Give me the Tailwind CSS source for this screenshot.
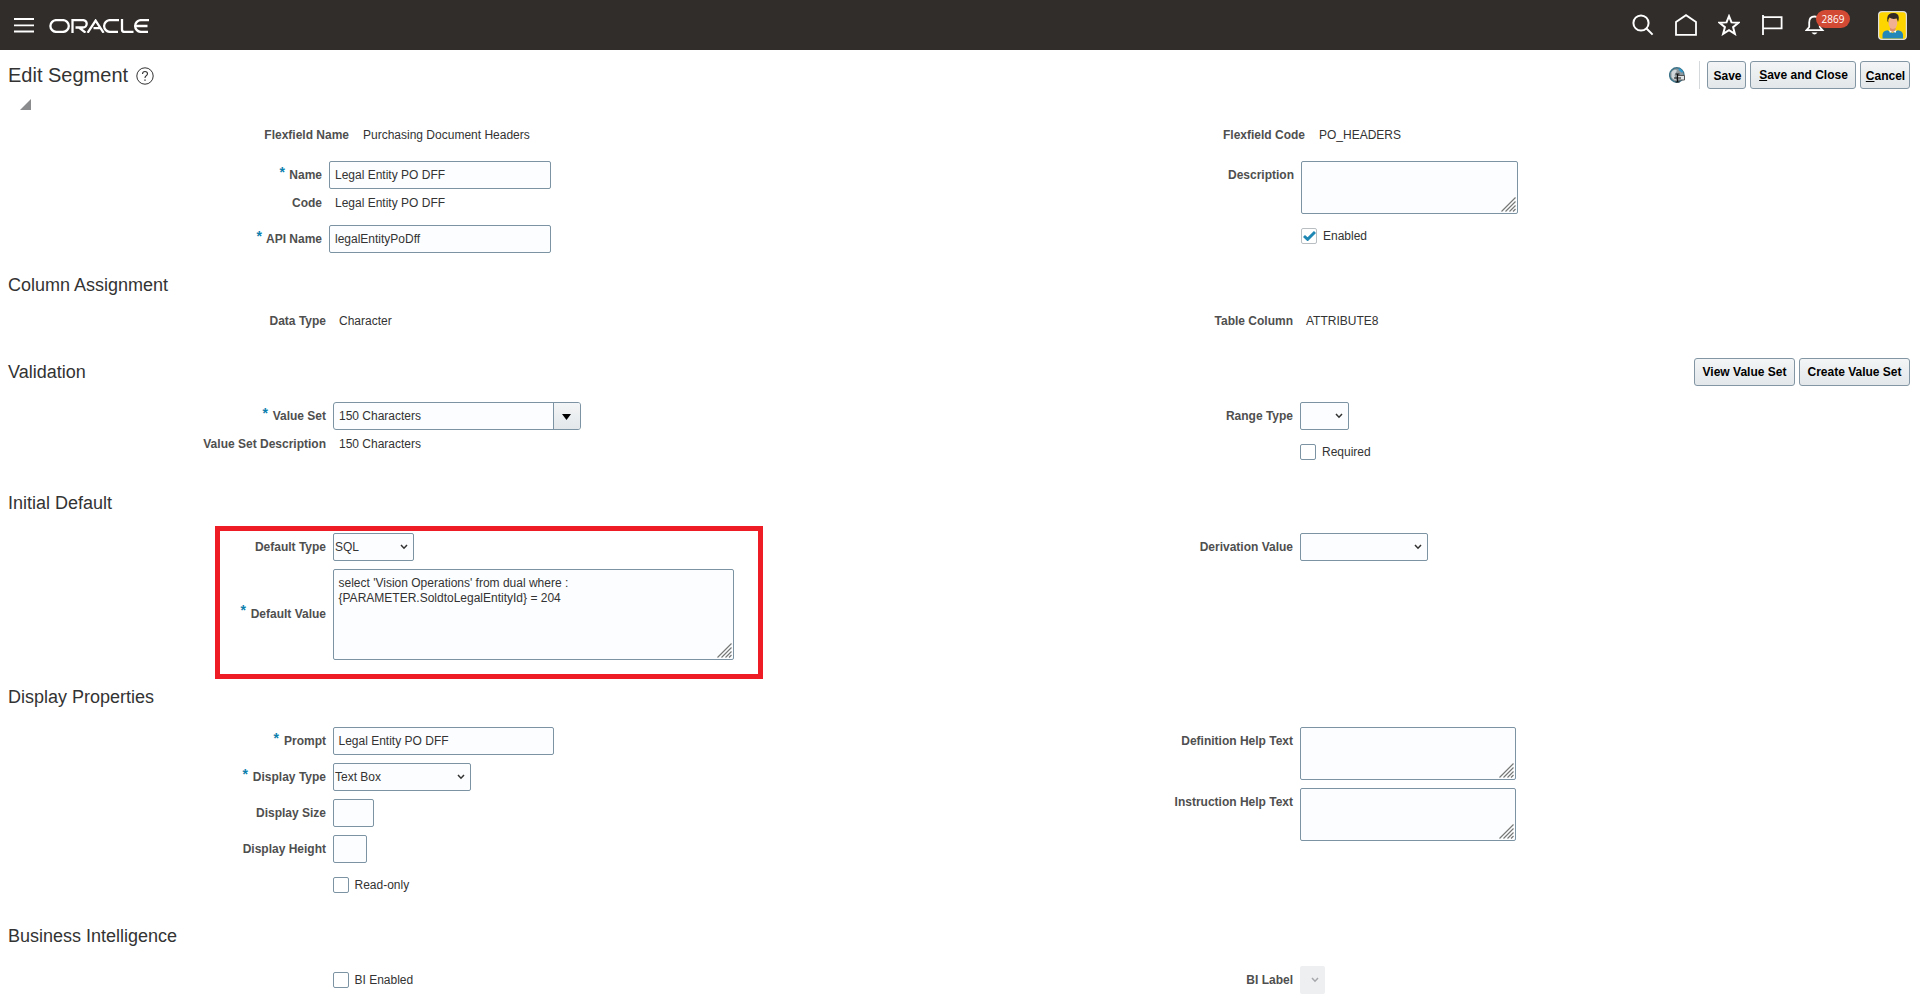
<!DOCTYPE html>
<html lang="en">
<head>
<meta charset="utf-8">
<title>Edit Segment</title>
<script src="https://cdn.jsdelivr.net/npm/@tailwindcss/browser@4"></script>
</head>
<body class="h-[1007px] w-[1920px] overflow-hidden bg-white font-['Liberation_Sans',Arial,sans-serif] text-xs leading-[14px] text-[#333]">
<svg class="hidden">
  <symbol id="grip" viewBox="0 0 15 15"><path d="M0.5 14.5L14.5 0.5M4.5 14.5L14.5 4.5M8.5 14.5L14.5 8.5M12 14.5L14.5 12" stroke="#777" stroke-width="1.2" fill="none"/></symbol>
  <symbol id="chev" viewBox="0 0 8 6"><path d="M1 1L4 4.2L7 1" stroke="currentColor" stroke-width="1.5" fill="none"/></symbol>
</svg>

<header class="flex h-[50px] items-center bg-[#312d2a] pr-[13px] pl-[14px]">
  <svg class="h-[15px] w-5" viewBox="0 0 20 15"><path d="M0 1H20M0 7.3H20M0 13.5H20" stroke="#fff" stroke-width="1.8"/></svg>
  <svg class="mt-[2px] ml-[15px] h-[14px] w-[101px]" viewBox="0 0 101 14" fill="none" stroke="#fff" stroke-width="2.3">
    <rect x="1.4" y="1.1" width="18.4" height="11.8" rx="5.9"/>
    <path d="M23.5 14V1.1H34a3.6 3.6 0 0 1 0 7.4H26.5M30 8.5L36.5 13.6"/>
    <path d="M38.6 13.8L46.6 1.6L54.6 13.8M44.5 9.2H51.5"/>
    <path d="M70 1.1H61a5.9 5.9 0 0 0 0 11.8H69"/>
    <path d="M73 0V10.5Q73 12.9 75.5 12.9H84.5"/>
    <path d="M100 1.1H92a5.9 5.9 0 0 0 0 11.8H99M86.5 7H98.5"/>
  </svg>
  <div class="ml-auto flex items-center text-white">
    <svg class="size-[22px]" viewBox="0 0 22 22" fill="none" stroke="#fff" stroke-width="2"><circle cx="9" cy="9" r="7.6"/><path d="M14.5 14.5L20.6 20.6"/></svg>
    <svg class="ml-[21px] size-[22px]" viewBox="0 0 22 22" fill="none" stroke="#fff" stroke-width="1.8"><path d="M1 20.9V8L11 1.2L21 8V20.9Z"/></svg>
    <svg class="ml-[21px] size-[22px]" viewBox="0 0 22 22" fill="none" stroke="#fff" stroke-width="2"><path d="M11 2.2L13.5 8.4L20.4 8.7L15.1 13.2L16.9 19.9L11 16.2L5.1 19.9L6.9 13.2L1.6 8.7L8.5 8.4Z"/></svg>
    <svg class="ml-[21px] h-[20px] w-[22px]" viewBox="0 0 22 20" fill="none" stroke="#fff" stroke-width="1.8"><path d="M2 0V20M2 2.2H20.6V13.4H2"/></svg>
    <div class="relative ml-[22px]">
      <svg class="h-[21px] w-[20px]" viewBox="0 0 20 21" fill="none" stroke="#fff" stroke-width="1.8"><path d="M1.5 15.2H17.5L14.8 12V7.5Q14.8 1.5 9.5 1.5T4.2 7.5V12Z"/><path d="M6.5 17.5Q9.5 21.5 12.5 17.5Z" fill="#fff" stroke="none"/></svg>
      <span class="absolute -top-[5px] left-[11px] h-[18px] w-[34px] rounded-full bg-[#d24a33] text-center font-['Open_Sans',sans-serif] text-[10px] leading-[18px]">2869</span>
    </div>
    <svg class="ml-[53px] size-[29px]" viewBox="0 0 29 29">
      <rect x="0.6" y="0.6" width="27.8" height="27.8" rx="3.5" fill="#ffd500" stroke="#ddd" stroke-width="1.2"/>
      <path d="M4.5 27.6V23.5Q5 19.5 9.5 19.2L14.5 22L19.8 19.2Q24.3 19.5 25 23.5V27.6Z" fill="#2388b8"/>
      <path d="M12 15H17.5V19.5L14.7 21.6L12 19.5Z" fill="#d98f70"/>
      <ellipse cx="14.9" cy="12" rx="4.4" ry="6" fill="#f0b091"/>
      <path d="M11.2 19L14.7 21.2L18.3 19L17.8 21.8L14.7 20.8L11.8 21.8Z" fill="#fff"/>
      <path d="M9.3 10Q8.5 3.5 13 2.2Q20.5 0.8 20.8 6.5Q20.8 9 20 11L18.8 7.5Q14 8.8 11.5 6.5Q10 8 10.3 11.5Z" fill="#332823"/>
    </svg>
  </div>
</header>

<div class="flex h-[50px] items-start pt-[11px] pr-[10px] pl-2">
  <h1 class="pt-px text-xl leading-[26px]">Edit Segment</h1>
  <svg class="mt-[6px] ml-2 size-[18px]" viewBox="0 0 18 18"><circle cx="9" cy="9" r="8.2" fill="none" stroke="#333"/><path d="M6.5 7Q6.6 4.5 9 4.5T11.5 6.8Q11.5 8 10.2 8.8T9 11" fill="none" stroke="#333" stroke-width="1.1"/><path d="M8.3 12.4H9.7V13.8H8.3Z" fill="#333"/></svg>
  <div class="ml-auto flex font-bold text-black">
    <svg class="mt-[6px] size-4" viewBox="0 0 16 16"><circle cx="7.8" cy="8" r="7.2" fill="#8d979c" stroke="#3d7389" stroke-width="1.4"/><path d="M2.5 5Q5.5 1.5 8 3.5L5.5 8L7 13Q4 13 2.5 10Z" fill="#d0d6d9"/><path d="M10 2L13.5 5" stroke="#2d9bd0" stroke-width="2"/><path d="M8.5 8.5H15.5V13H8.5Z" fill="#dfe3e5" stroke="#555"/><path d="M6.5 7H10.5M8.5 7V15M6.5 15H10.5M5 11H12" stroke="#111" stroke-width="1.2"/></svg>
    <div class="mr-[7px] ml-[14px] h-7 w-px bg-[#d6d9db]"></div>
    <div class="flex gap-1">
      <button class="h-7 w-[39px] rounded-[3px] border border-[#8296a4] bg-linear-to-b from-[#f3f5f6] to-[#e3e7e9] pt-[2px] pl-[2px]">Save</button>
      <button class="h-7 w-[106px] rounded-[3px] border border-[#8296a4] bg-linear-to-b from-[#f3f5f6] to-[#e3e7e9] pl-px"><u>S</u>ave and Close</button>
      <button class="h-7 w-[50px] rounded-[3px] border border-[#8296a4] bg-linear-to-b from-[#f3f5f6] to-[#e3e7e9] pt-[2px] pl-px"><u>C</u>ancel</button>
    </div>
  </div>
</div>

<!-- Flexfield details -->
<section class="flex h-[172px]">
  <div class="w-[967px]">
    <svg class="-mt-px ml-5 size-[11px]" viewBox="0 0 11 11"><path d="M11 0V11H0Z" fill="#8b8c8d"/></svg>
    <div class="mt-[18px] flex"><b class="w-[349px] text-right text-[#4f4f4f]">Flexfield Name</b><span class="ml-[14px]">Purchasing Document Headers</span></div>
    <div class="mt-[19px] flex items-center"><b class="w-[285px] pb-[7px] text-right text-sm text-[#0b7fad]">*</b><b class="w-[37px] text-right text-[#4f4f4f]">Name</b><div class="ml-[7px] h-7 w-[222px] rounded-[2px] border border-[#7b93a3] bg-[#fcfdfe] px-[5px] leading-[26px]">Legal Entity PO DFF</div></div>
    <div class="mt-[7px] flex"><b class="w-[322px] text-right text-[#4f4f4f]">Code</b><span class="ml-[13px]">Legal Entity PO DFF</span></div>
    <div class="mt-[15px] flex items-center"><b class="w-[262px] pb-[7px] text-right text-sm text-[#0b7fad]">*</b><b class="w-[60px] text-right text-[#4f4f4f]">API Name</b><div class="ml-[7px] h-7 w-[222px] rounded-[2px] border border-[#7b93a3] bg-[#fcfdfe] px-[5px] leading-[26px]">legalEntityPoDff</div></div>
  </div>
  <div class="flex-1 pt-7">
    <div class="flex"><b class="w-[338px] text-right text-[#4f4f4f]">Flexfield Code</b><span class="ml-[14px]">PO_HEADERS</span></div>
    <div class="mt-[19px] flex"><b class="mt-[7px] w-[327px] text-right text-[#4f4f4f]">Description</b><div class="ml-[7px] flex h-[53px] w-[217px] items-end justify-end rounded-[2px] border border-[#7b93a3] bg-[#fcfdfe] p-px"><svg class="size-[15px]"><use href="#grip"/></svg></div></div>
    <div class="mt-[14px] ml-[334px] flex items-center"><div class="flex size-4 items-center justify-center rounded-[2px] border border-[#b9bec2]"><svg class="h-[10px] w-[13px]" viewBox="0 0 13 10"><path d="M1 5L4.6 8.4L12 1" stroke="#1f87b3" stroke-width="2.9" fill="none"/></svg></div><span class="ml-[6px]">Enabled</span></div>
  </div>
</section>

<!-- Column Assignment -->
<section class="h-[86px] pt-[2px]">
  <h2 class="pl-2 text-lg leading-[22px]">Column Assignment</h2>
  <div class="mt-[18px] flex">
    <b class="w-[326px] text-right text-[#4f4f4f]">Data Type</b><span class="ml-[13px] w-[628px]">Character</span>
    <b class="w-[326px] text-right text-[#4f4f4f]">Table Column</b><span class="ml-[13px]">ATTRIBUTE8</span>
  </div>
</section>

<!-- Validation -->
<section class="h-[134px]">
  <div class="flex h-7 pr-[10px] pl-2">
    <h2 class="pt-[3px] text-lg leading-[22px]">Validation</h2>
    <div class="ml-auto flex gap-1 font-bold text-black">
      <button class="h-7 w-[101px] rounded-[3px] border border-[#8296a4] bg-linear-to-b from-[#f3f5f6] to-[#e3e7e9]">View Value Set</button>
      <button class="h-7 w-[111px] rounded-[3px] border border-[#8296a4] bg-linear-to-b from-[#f3f5f6] to-[#e3e7e9]">Create Value Set</button>
    </div>
  </div>
  <div class="mt-4 flex">
    <div class="w-[967px]">
      <div class="flex items-center"><b class="w-[268px] pb-[7px] text-right text-sm text-[#0b7fad]">*</b><b class="w-[58px] text-right text-[#4f4f4f]">Value Set</b><div class="ml-[7px] flex h-7 w-[248px] overflow-hidden rounded-[3px] border border-[#7b93a3] bg-[#fcfdfe] leading-[26px]"><span class="w-[219px] pl-[5px]">150 Characters</span><div class="flex flex-1 items-center justify-center border-l border-[#7b93a3] bg-linear-to-b from-[#f3f5f6] to-[#e3e7e9] pr-px"><svg class="mt-[2px] h-[6px] w-[9px]" viewBox="0 0 9 6"><path d="M0 0H9L4.5 6Z"/></svg></div></div></div>
      <div class="mt-[7px] flex"><b class="w-[326px] text-right text-[#4f4f4f]">Value Set Description</b><span class="ml-[13px]">150 Characters</span></div>
    </div>
    <div class="flex-1">
      <div class="flex items-center"><b class="w-[326px] text-right text-[#4f4f4f]">Range Type</b><div class="ml-[7px] flex h-7 w-[49px] items-center justify-end rounded-[2px] border border-[#7b93a3] bg-[#fcfdfe] pr-[5px]"><svg class="h-[6px] w-2 text-[#333]"><use href="#chev"/></svg></div></div>
      <div class="mt-[14px] ml-[333px] flex items-center"><div class="size-4 rounded-[2px] border border-[#7b93a3]"></div><span class="ml-[6px]">Required</span></div>
    </div>
  </div>
</section>

<!-- Initial Default -->
<section class="relative h-[194px]">
  <h2 class="pl-2 text-lg leading-[22px]">Initial Default</h2>
  <div class="absolute top-[34px] left-[215px] h-[153px] w-[548px] border-[5px] border-[#ee1c24]"></div>
  <div class="mt-[19px] flex">
    <div class="w-[967px]">
      <div class="flex items-center"><b class="w-[326px] text-right text-[#4f4f4f]">Default Type</b><div class="ml-[7px] flex h-7 w-[81px] items-center justify-between rounded-[2px] border border-[#7b93a3] bg-[#fcfdfe] pr-[5px] pl-px"><span>SQL</span><svg class="h-[6px] w-2 text-[#333]"><use href="#chev"/></svg></div></div>
      <div class="mt-2 flex items-center"><b class="w-[246px] pb-[9px] text-right text-sm text-[#0b7fad]">*</b><b class="w-20 pb-[2px] text-right text-[#4f4f4f]">Default Value</b><div class="relative ml-[7px] h-[91px] w-[401px] rounded-[2px] border border-[#7b93a3] bg-[#fcfdfe] px-[4.5px] py-[6px] leading-[15px]">select 'Vision Operations' from dual where :<br>{PARAMETER.SoldtoLegalEntityId} = 204<svg class="absolute right-px bottom-px size-[15px]"><use href="#grip"/></svg></div></div>
    </div>
    <div class="flex-1">
      <div class="flex items-center"><b class="w-[326px] text-right text-[#4f4f4f]">Derivation Value</b><div class="ml-[7px] flex h-7 w-[128px] items-center justify-end rounded-[2px] border border-[#7b93a3] bg-[#fcfdfe] pr-[5px]"><svg class="h-[6px] w-2 text-[#333]"><use href="#chev"/></svg></div></div>
    </div>
  </div>
</section>

<!-- Display Properties -->
<section class="h-[239px]">
  <h2 class="pl-2 text-lg leading-[22px]">Display Properties</h2>
  <div class="mt-[19px] flex">
    <div class="flex w-[967px] flex-col gap-2">
      <div class="flex items-center"><b class="w-[279px] pb-[7px] text-right text-sm text-[#0b7fad]">*</b><b class="w-[47px] text-right text-[#4f4f4f]">Prompt</b><div class="ml-[7px] h-7 w-[221px] rounded-[2px] border border-[#7b93a3] bg-[#fcfdfe] px-[4.5px] leading-[26px]">Legal Entity PO DFF</div></div>
      <div class="flex items-center"><b class="w-[248px] pb-[7px] text-right text-sm text-[#0b7fad]">*</b><b class="w-[78px] text-right text-[#4f4f4f]">Display Type</b><div class="ml-[7px] flex h-7 w-[138px] items-center justify-between rounded-[2px] border border-[#7b93a3] bg-[#fcfdfe] pr-[5px] pl-px"><span>Text Box</span><svg class="h-[6px] w-2 text-[#333]"><use href="#chev"/></svg></div></div>
      <div class="flex items-center"><b class="w-[326px] text-right text-[#4f4f4f]">Display Size</b><div class="ml-[7px] h-7 w-[41px] rounded-[2px] border border-[#7b93a3] bg-[#fcfdfe]"></div></div>
      <div class="flex items-center"><b class="w-[326px] text-right text-[#4f4f4f]">Display Height</b><div class="ml-[7px] h-7 w-[34px] rounded-[2px] border border-[#7b93a3] bg-[#fcfdfe]"></div></div>
      <div class="mt-[6px] ml-[333px] flex items-center"><div class="size-4 rounded-[2px] border border-[#7b93a3]"></div><span class="ml-[5.5px]">Read-only</span></div>
    </div>
    <div class="flex flex-1 flex-col gap-2">
      <div class="flex"><b class="mt-[7px] w-[326px] text-right text-[#4f4f4f]">Definition Help Text</b><div class="ml-[7px] flex h-[53px] w-[216px] items-end justify-end rounded-[2px] border border-[#7b93a3] bg-[#fcfdfe] p-px"><svg class="size-[15px]"><use href="#grip"/></svg></div></div>
      <div class="flex"><b class="mt-[7px] w-[326px] text-right text-[#4f4f4f]">Instruction Help Text</b><div class="ml-[7px] flex h-[53px] w-[216px] items-end justify-end rounded-[2px] border border-[#7b93a3] bg-[#fcfdfe] p-px"><svg class="size-[15px]"><use href="#grip"/></svg></div></div>
    </div>
  </div>
</section>

<!-- Business Intelligence -->
<section>
  <h2 class="pl-2 text-lg leading-[22px]">Business Intelligence</h2>
  <div class="mt-[19px] flex items-center">
    <div class="flex w-[967px] items-center pl-[333px]"><div class="size-4 rounded-[2px] border border-[#7b93a3]"></div><span class="ml-[5.5px]">BI Enabled</span></div>
    <b class="w-[326px] text-right text-[#4f4f4f]">BI Label</b><div class="ml-[7px] flex h-7 w-[25px] items-center justify-end rounded-[2px] bg-[#eeeff0] pr-[6px]"><svg class="h-[6px] w-2 text-[#a5a8aa]"><use href="#chev"/></svg></div>
  </div>
</section>
</body>
</html>
